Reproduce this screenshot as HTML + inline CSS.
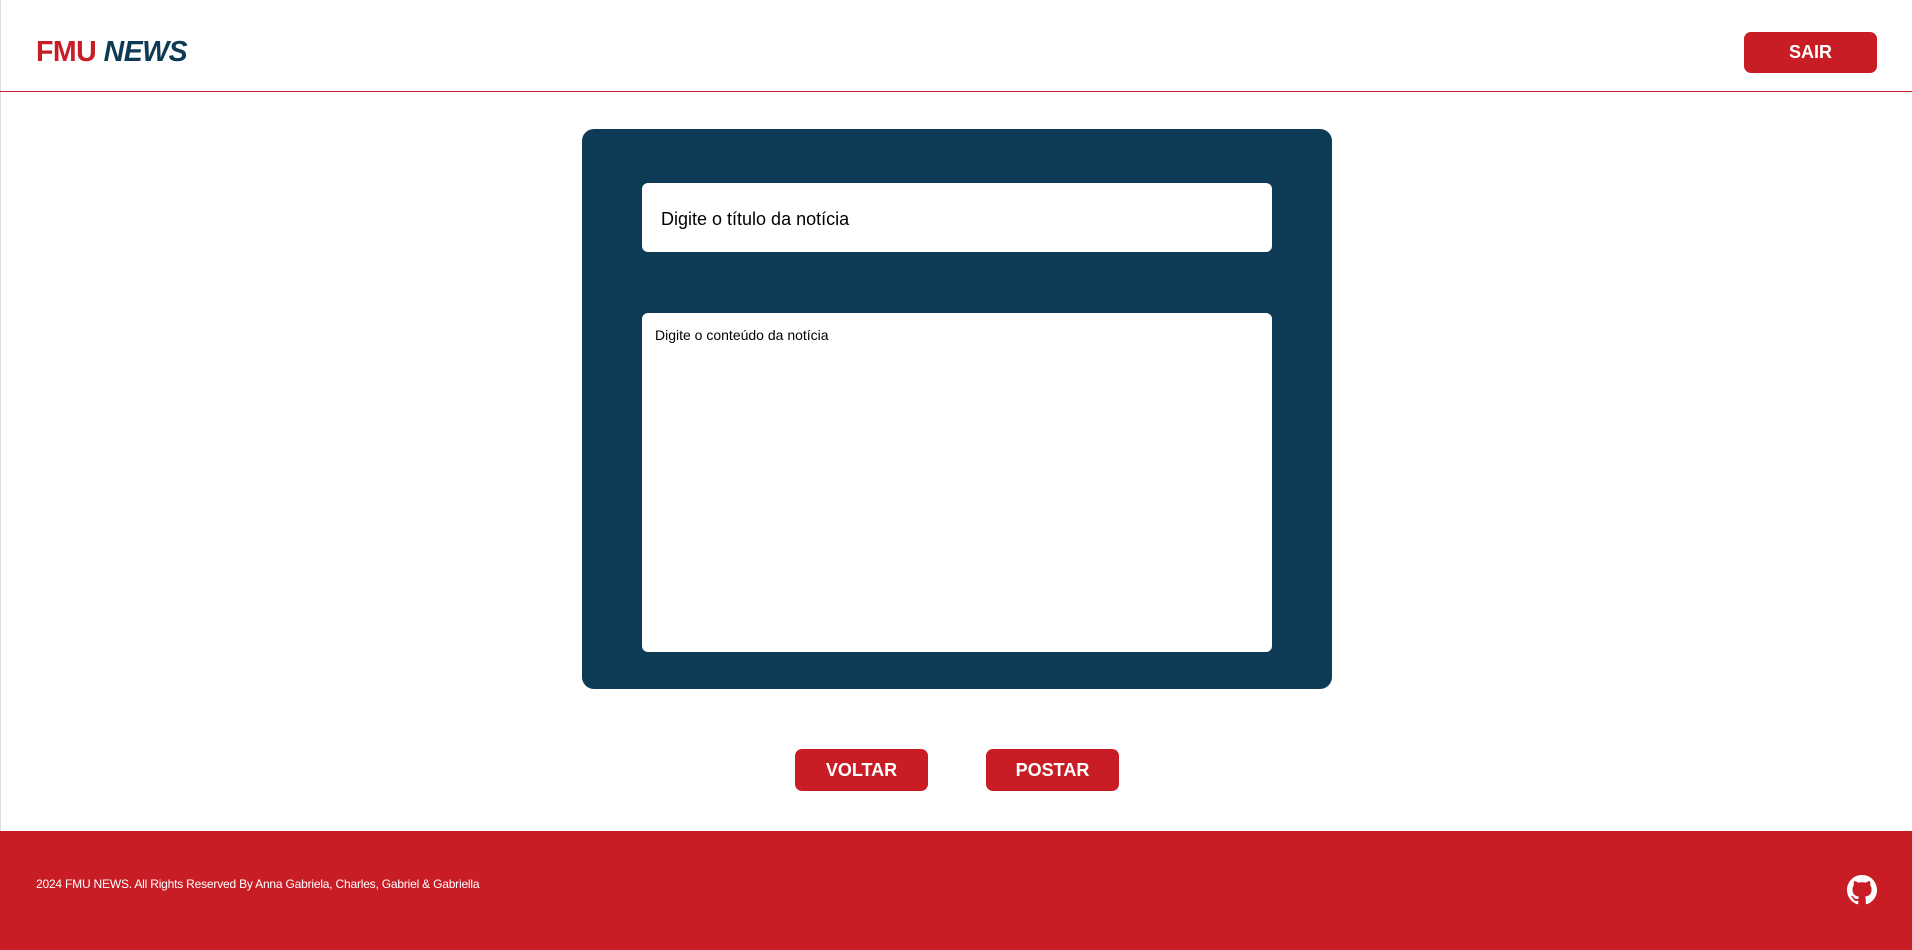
<!DOCTYPE html>
<html><head><meta charset="utf-8"><style>
*{box-sizing:border-box;margin:0;padding:0}
body{width:1912px;height:950px;overflow:hidden;background:#fff;font-family:"Liberation Sans",Roboto,sans-serif;position:relative}
.lb{position:absolute;left:0;top:0;width:1px;height:950px;background:#ddd}
.logo{position:absolute;left:36px;top:36px;font-size:28.5px;font-weight:bold;letter-spacing:-0.5px}
.logo .a{color:#c81d25}.logo .b{color:#0d3a54;font-style:italic}
.hline{position:absolute;left:0;top:91px;width:1912px;height:1px;background:#c81d25}
.btn{position:absolute;background:#c81d25;color:#fff;font-weight:bold;font-size:18px;border-radius:7px;display:flex;align-items:center;justify-content:center}
.card{position:absolute;left:582px;top:129px;width:750px;height:560px;background:#0d3a54;border-radius:12px}
.in{position:absolute;background:#fff;border-radius:6px;color:#000}
footer{position:absolute;left:0;top:831px;width:1912px;height:119px;background:#c81d25}
.ft{position:absolute;left:36px;top:877px;color:#fff;font-size:12px;letter-spacing:-0.2px}
</style></head><body>
<div class="lb"></div>
<div class="logo"><span class="a">FMU</span> <span class="b">NEWS</span></div>
<div class="btn" style="left:1744px;top:32px;width:133px;height:41px">SAIR</div>
<div class="hline"></div>
<div class="card"></div>
<div class="in" style="left:642px;top:183px;width:630px;height:69px;font-size:18px;padding:26px 0 0 19px">Digite o título da notícia</div>
<div class="in" style="left:642px;top:313px;width:630px;height:339px;font-size:14px;padding:14px 0 0 13px">Digite o conteúdo da notícia</div>
<div class="btn" style="left:795px;top:749px;width:133px;height:42px">VOLTAR</div>
<div class="btn" style="left:986px;top:749px;width:133px;height:42px">POSTAR</div>
<footer></footer>
<div class="ft">2024 FMU NEWS. All Rights Reserved By Anna Gabriela, Charles, Gabriel &amp; Gabriella</div>
<svg style="position:absolute;left:1847px;top:875px" width="30" height="30" viewBox="0 0 16 16"><path fill="#fff" d="M8 0C3.58 0 0 3.58 0 8c0 3.54 2.29 6.53 5.47 7.59.4.07.55-.17.55-.38 0-.19-.01-.82-.01-1.49-2.01.37-2.53-.49-2.69-.94-.09-.23-.48-.94-.82-1.130-.28-.15-.68-.52-.01-.53.63-.01 1.08.58 1.23.82.72 1.21 1.87.87 2.33.66.07-.52.28-.87.51-1.07-1.78-.2-3.64-.89-3.64-3.95 0-.87.31-1.59.82-2.15-.08-.2-.36-1.02.08-2.12 0 0 .67-.21 2.2.82.64-.18 1.32-.27 2-.27.68 0 1.36.09 2 .27 1.53-1.04 2.2-.82 2.2-.82.44 1.1.16 1.92.08 2.12.51.56.82 1.27.82 2.15 0 3.07-1.87 3.75-3.65 3.95.29.25.54.73.54 1.48 0 1.07-.01 1.93-.01 2.2 0 .21.15.46.55.38A8.013 8.013 0 0 0 16 8c0-4.42-3.58-8-8-8z"/></svg>
</body></html>
